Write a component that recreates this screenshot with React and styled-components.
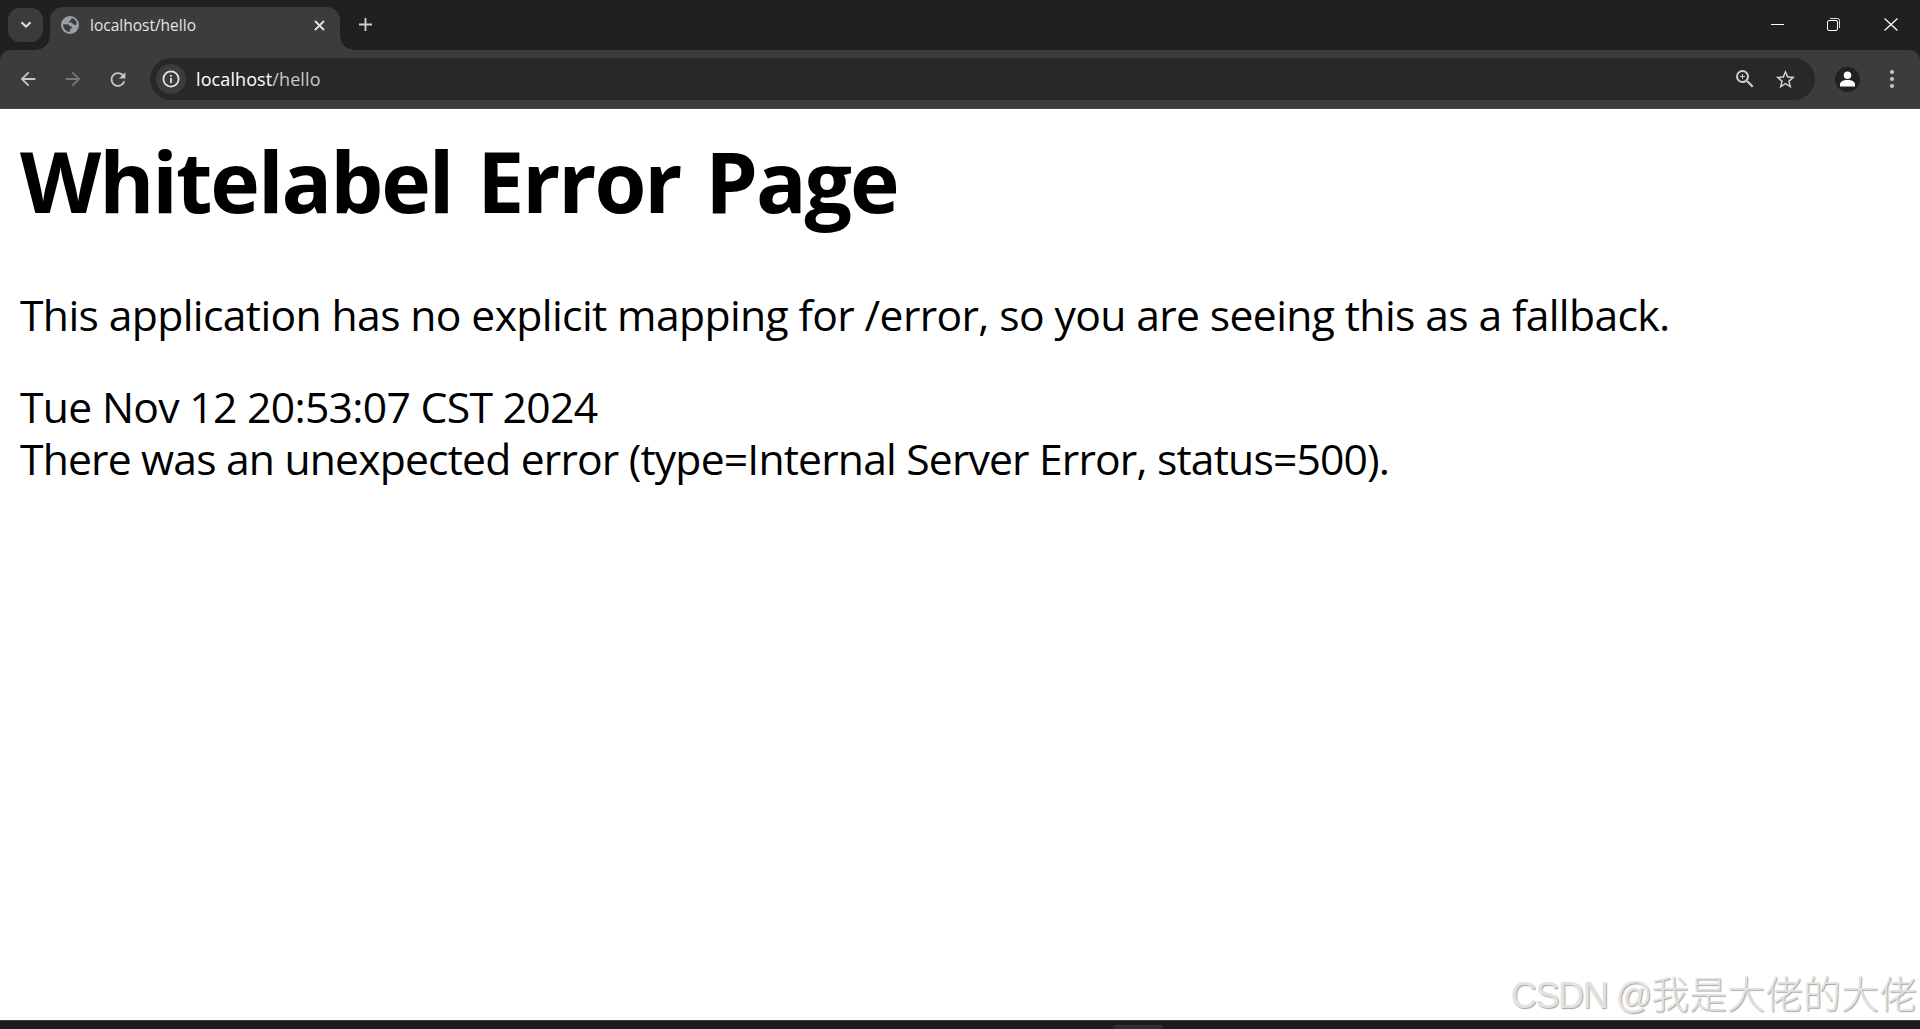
import React from "react";
import styled, { createGlobalStyle, css } from "styled-components";
import { MdArrowBack, MdArrowForward, MdRefresh, MdZoomIn, MdStarBorder } from "react-icons/md";

const GlobalStyle = createGlobalStyle`
  * {
    box-sizing: border-box;
  }

  body {
    margin: 0;
    background: #fff;
    font-family: "Open Sans", "Noto Sans", sans-serif;
  }
`;

const Window = styled.div`
  display: flex;
  flex-direction: column;
  width: 100%;
  height: 1029px;
  overflow: hidden;
`;

const TabStrip = styled.header`
  display: flex;
  flex: none;
  height: 50px;
  padding: 8px 0 0 8px;
  background: #1f2120;
`;

const TabSearch = styled.button`
  display: flex;
  align-items: center;
  justify-content: center;
  width: 35px;
  height: 34px;
  margin: 0 7px 0 0;
  padding: 0;
  border: none;
  border-radius: 12px;
  background: #3b3b3b;
`;

const Tab = styled.div`
  position: relative;
  display: flex;
  align-items: center;
  width: 290px;
  height: 43px;
  margin-top: -1px;
  padding: 0 15px 7px 11px;
  border-radius: 13px 13px 0 0;
  background: #3c3c3c;

  &::before,
  &::after {
    content: "";
    position: absolute;
    bottom: 0;
    width: 14px;
    height: 14px;
  }

  &::before {
    right: 100%;
    background: radial-gradient(circle at 0 0, transparent 13.5px, #3c3c3c 14px);
  }

  &::after {
    left: 100%;
    background: radial-gradient(circle at 100% 0, transparent 13.5px, #3c3c3c 14px);
  }
`;

const TabTitle = styled.span`
  flex: 1;
  margin-left: 11px;
  color: #e3e3e3;
  font-size: 15.5px;
  line-height: 20px;
`;

const NewTab = styled.div`
  margin: 9px 0 0 18px;
  height: 15px;
  line-height: 0;
`;

const WindowButtons = styled.div`
  display: flex;
  gap: 43px;
  margin: 9px 22px 0 auto;
`;

const Toolbar = styled.nav`
  display: flex;
  flex: none;
  align-items: center;
  height: 59px;
  background: #1f2120;
`;

const ToolbarInner = styled.div`
  display: flex;
  align-items: center;
  width: 100%;
  height: 59px;
  padding: 0 26px 0 17px;
  border-radius: 11px 11px 0 0;
  border-bottom: 1px solid #4a4849;
  background: #3c3c3c;
`;

const NavIcon = styled.div`
  display: flex;
  width: 22px;
  margin-right: 23px;
  color: ${(props) => (props.$disabled ? "#777" : "#c7c7c7")};
`;

const AddressBar = styled.div`
  display: flex;
  flex: 1;
  align-items: center;
  height: 42px;
  margin-left: -2px;
  padding: 0 18px 0 6px;
  border-radius: 21px;
  background: #282828;
`;

const SiteInfo = styled.div`
  display: flex;
  align-items: center;
  justify-content: center;
  width: 30px;
  height: 30px;
  border-radius: 50%;
  background: #3c3c3c;
`;

const Url = styled.div`
  flex: 1;
  margin-left: 10px;
  color: #fff;
  font-size: 18px;
  line-height: 26px;
  letter-spacing: 0.1px;

  span {
    color: #c7c7c7;
  }
`;

const BarIcon = styled.div`
  display: flex;
  margin-left: 17px;
  color: #cfcfcf;
`;

const Avatar = styled.div`
  display: flex;
  align-items: center;
  justify-content: center;
  width: 25px;
  height: 25px;
  margin: 0 30px 0 20px;
  border-radius: 50%;
  background: #1f2120;
`;

const Menu = styled.div`
  display: flex;
  flex-direction: column;
  gap: 3px;

  i {
    width: 4px;
    height: 4px;
    border-radius: 50%;
    background: #c7c7c7;
  }
`;

const Page = styled.main`
  position: relative;
  flex: 1;
  padding: 24px 20px 0;
  background: #fff;
  color: #000;
`;

const Title = styled.h1`
  margin: 0;
  font-size: 84px;
  font-weight: 700;
  line-height: 96px;
  white-space: nowrap;
  letter-spacing: -2.05px;
  word-spacing: 5px;
`;

const line = css`
  font-size: 42.67px;
  line-height: 52px;
  white-space: nowrap;
  letter-spacing: ${(props) => props.$spacing}px;
`;

const Message = styled.p`
  margin: 60px 0 40px;
  ${line}
`;

const Detail = styled.div`
  ${line}
`;

const Watermark = styled.div`
  position: absolute;
  right: 3px;
  bottom: 0;
  color: #e2e2e2;
  font-family: "Liberation Sans", "Noto Sans CJK SC", sans-serif;
  font-size: 38px;
  font-weight: 300;
  line-height: 48px;
  white-space: nowrap;
  text-shadow: 1px 1px 1px #a4a4a4;

  span {
    font-size: 36px;
    letter-spacing: -1.4px;
  }
`;

const Taskbar = styled.footer`
  display: flex;
  flex: none;
  height: 9px;
  padding: 4px 0 0 1113px;
  border-top: 1px solid #3d3d3d;
  background: #1c1c1c;
`;

const TaskItem = styled.div`
  width: 50px;
  height: 4px;
  border-top: 1px solid #3a3a3a;
  border-radius: 5px 5px 0 0;
  background: #2e2e2e;
`;

const App = () => {
  return (
    <Window>
      <GlobalStyle />
      <TabStrip>
        <TabSearch>
          <svg width="12" height="8" viewBox="0 0 12 8">
            <path d="M1.5 1.2 6 5.7l4.5-4.5" fill="none" stroke="#e3e3e3" strokeWidth="2" />
          </svg>
        </TabSearch>
        <Tab>
          <svg width="18" height="18" viewBox="0 0 18 18">
            <circle cx="9" cy="9" r="9" fill="#9aa0a6" />
            <path
              d="M10.5 2.1c3 .6 5.3 3.2 5.4 6.2-1 .8-2.1.8-3.3.3-1-.5-1-1.8-2.3-2H7.9c0-1.4.7-2.2 2-2.4z M2.1 8.2h4c1.5.1 2.7 1 2.9 2.3h2.2c-.1 1.6-.8 2.4-2.2 2.5v2.9c-3.6 0-6.9-3-6.9-7.7z"
              fill="#3c3c3c"
            />
          </svg>
          <TabTitle>localhost/hello</TabTitle>
          <svg width="11" height="11" viewBox="0 0 11 11">
            <path d="m1 1 9 9M10 1l-9 9" stroke="#e3e3e3" strokeWidth="1.8" />
          </svg>
        </Tab>
        <NewTab>
          <svg width="15" height="15" viewBox="0 0 15 15">
            <path d="M7.5 1v13M1 7.5h13" stroke="#d0d0d0" strokeWidth="1.8" />
          </svg>
        </NewTab>
        <WindowButtons>
          <svg width="13" height="14" viewBox="0 0 13 14">
            <path d="M0 7.5h13" stroke="#fff" />
          </svg>
          <svg width="14" height="14" viewBox="0 0 14 14">
            <rect x=".5" y="3.5" width="10" height="10" rx="1.5" fill="none" stroke="#fff" />
            <path d="M3 1.5h7.5a2 2 0 0 1 2 2V11" fill="none" stroke="#ddd" />
          </svg>
          <svg width="14" height="14" viewBox="0 0 14 14">
            <path d="m.5 1.5 13 12M13.5 1.5l-13 12" stroke="#fff" strokeWidth="1.2" />
          </svg>
        </WindowButtons>
      </TabStrip>

      <Toolbar>
        <ToolbarInner>
          <NavIcon>
            <MdArrowBack size={22} />
          </NavIcon>
          <NavIcon $disabled>
            <MdArrowForward size={22} />
          </NavIcon>
          <NavIcon>
            <MdRefresh size={23} />
          </NavIcon>
          <AddressBar>
            <SiteInfo>
              <svg width="18" height="18" viewBox="0 0 18 18">
                <circle cx="9" cy="9" r="7.6" fill="none" stroke="#e3e3e3" strokeWidth="1.8" />
                <path d="M9 8v5M9 5v1.8" stroke="#e3e3e3" strokeWidth="1.8" />
              </svg>
            </SiteInfo>
            <Url>
              localhost<span>/hello</span>
            </Url>
            <BarIcon>
              <MdZoomIn size={24} />
            </BarIcon>
            <BarIcon>
              <MdStarBorder size={23} />
            </BarIcon>
          </AddressBar>
          <Avatar>
            <svg width="15" height="16" viewBox="0 0 15 16">
              <circle cx="7.5" cy="4.2" r="3.8" fill="#fff" />
              <path d="M0 15.5v-2.3c0-2.7 3.6-4.2 7.5-4.2s7.5 1.5 7.5 4.2v2.3z" fill="#fff" />
            </svg>
          </Avatar>
          <Menu>
            <i />
            <i />
            <i />
          </Menu>
        </ToolbarInner>
      </Toolbar>

      <Page>
        <Title>Whitelabel Error Page</Title>
        <Message $spacing={-0.63}>
          This application has no explicit mapping for /error, so you are seeing this as a fallback.
        </Message>
        <Detail $spacing={-0.7}>Tue Nov 12 20:53:07 CST 2024</Detail>
        <Detail $spacing={-0.83}>There was an unexpected error (type=Internal Server Error, status=500).</Detail>
        <Watermark>
          <span>CSDN @</span>我是大佬的大佬
        </Watermark>
      </Page>

      <Taskbar>
        <TaskItem />
      </Taskbar>
    </Window>
  );
};

export default App;
